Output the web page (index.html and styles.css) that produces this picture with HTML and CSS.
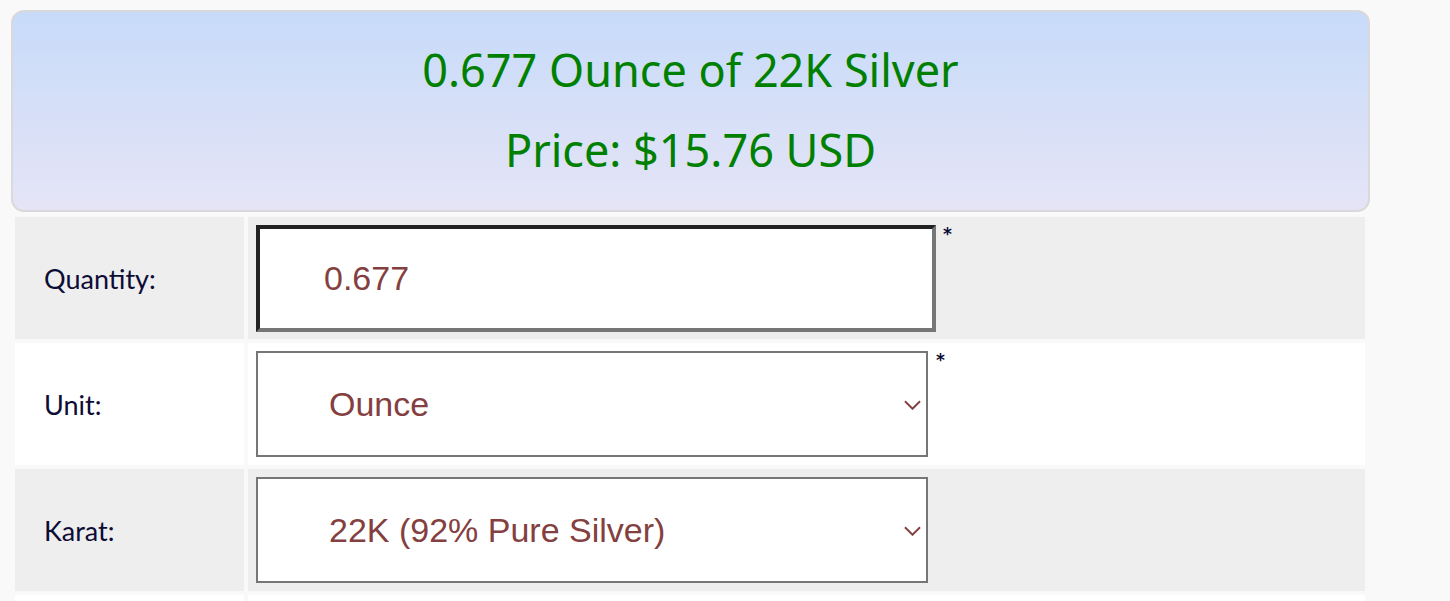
FILE: index.html
```html
<!DOCTYPE html>
<html lang="en">
<head>
  <meta charset="UTF-8" />
  <meta name="viewport" content="width=device-width, initial-scale=1.0"/>
  <title>Silver Price Calculator</title>
  <link rel="stylesheet" href="styles.css">
</head>
<body>
  <div class="calc">
    <div class="result">
      <p class="result-line">0.677 Ounce of 22K Silver</p>
      <p class="result-line">Price: $15.76 USD</p>
    </div>
    <table class="calc-table">
      <tr class="row-grey">
        <td class="label">Quantity:</td>
        <td class="value">
          <div class="field">
            <input type="text" id="qty" class="text-input" value="0.677" />
            <span class="req">*</span>
          </div>
        </td>
      </tr>
      <tr class="row-white">
        <td class="label">Unit:</td>
        <td class="value">
          <div class="field">
            <div class="select-wrap">
              <select id="unit" class="select-input">
                <option>Ounce</option>
                <option>Gram</option>
                <option>Kilogram</option>
              </select>
              <svg class="chevron" viewBox="0 0 18 10"><path d="M1 1l8 8 8-8"/></svg>
            </div>
            <span class="req req-select">*</span>
          </div>
        </td>
      </tr>
      <tr class="row-grey">
        <td class="label">Karat:</td>
        <td class="value">
          <div class="field">
            <div class="select-wrap">
              <select id="karat" class="select-input">
                <option>22K (92% Pure Silver)</option>
                <option>24K (99.9% Pure Silver)</option>
              </select>
              <svg class="chevron" viewBox="0 0 18 10"><path d="M1 1l8 8 8-8"/></svg>
            </div>
          </div>
        </td>
      </tr>
      <tr class="row-white">
        <td class="label">&nbsp;</td>
        <td class="value">&nbsp;</td>
      </tr>
    </table>
  </div>
</body>
</html>
```

FILE: styles.css
```css
* { box-sizing: border-box; }
body { margin: 0; background-color: #f9f9f9; font-family: "Lato", "Noto Sans", sans-serif; }
.calc { width: 1359px; margin: 10px 0 0 11px; }

.result { border: 2px solid #d9d9dc; border-radius: 13px; background: linear-gradient(to bottom, #c7dbf9, #e5e4f6); padding: 18px 0 20px; text-align: center; }
.result-line { margin: 0; line-height: 80px; font-family: "Noto Sans", sans-serif; font-size: 45px; color: #008000; }

.calc-table { width: 1358px; border-spacing: 4px; margin-top: 1px; background-color: #f9f9f9; }
.calc-table td { height: 122px; padding: 0; vertical-align: middle; }
.row-grey td { background-color: #eeeeee; }
.row-white td { background-color: #ffffff; }
.label { width: 229px; padding-left: 29px !important; font-size: 27px; color: #0c0c35; }
.field { display: flex; align-items: flex-start; padding-left: 8px; }
.req { font-family: "DejaVu Sans", sans-serif; font-size: 17px; font-weight: bold; color: #0c0c35; margin-left: 7px; margin-top: 1px; line-height: 1; }
.req-select { margin-left: 8px; }

.text-input { width: 680px; height: 107px; border: 4px solid; border-color: #222222 #767676 #767676 #222222; padding: 0 0 0 64px; font-family: "Liberation Sans", Arial, sans-serif; font-size: 34px; color: #844040; background-color: #fff; outline: none; }
.select-wrap { position: relative; }
.select-input { display: block; width: 672px; height: 106px; border: 2px solid #767676; border-radius: 0; padding: 0 40px 0 71px; font-family: "Liberation Sans", Arial, sans-serif; font-size: 34px; color: #844040; background-color: #fff; appearance: none; -webkit-appearance: none; }
.chevron { position: absolute; right: 7px; top: 49px; width: 17px; height: 10px; fill: none; stroke: #844040; stroke-width: 2; pointer-events: none; }
```
